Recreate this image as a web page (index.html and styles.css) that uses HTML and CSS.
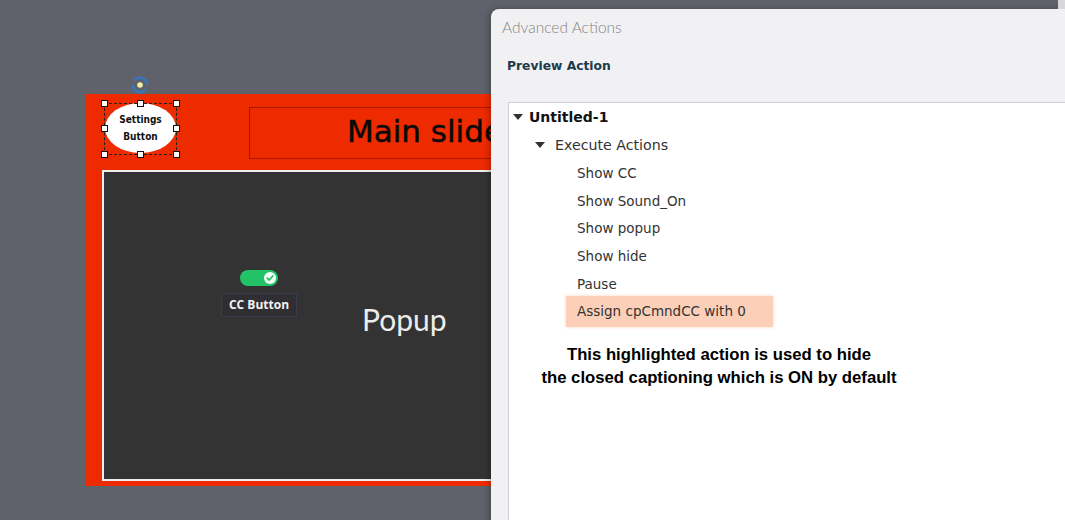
FILE: index.html
```html
<!DOCTYPE html>
<html lang="en">
<head>
  <meta charset="UTF-8" />
  <title>Advanced Actions - Preview</title>
  <link rel="stylesheet" href="styles.css">
</head>
<body>
  <!-- Slide being edited on the stage -->
  <div class="stage">
    <div class="slide">
      <div class="slide-header">
        <div class="settings-wrap">
          <div class="settings-btn">Settings<br>Button</div>
          <div class="selection">
            <span class="handle h-tl"></span><span class="handle h-tc"></span><span class="handle h-tr"></span>
            <span class="handle h-ml"></span><span class="handle h-mr"></span>
            <span class="handle h-bl"></span><span class="handle h-bc"></span><span class="handle h-br"></span>
          </div>
          <!-- rotate handle -->
          <svg class="rotate" width="20" height="20" viewBox="0 0 20 20">
            <path d="M4.5 5.5 A7 7 0 0 1 17 10" fill="none" stroke="#2b7bd0" stroke-width="2.4" opacity="0.85"/>
            <path d="M15.5 14.5 A7 7 0 0 1 3 10" fill="none" stroke="#2b7bd0" stroke-width="2.4" opacity="0.85"/>
            <circle cx="10" cy="10" r="2.8" fill="#f3efa6"/>
          </svg>
        </div>
        <div class="title-box">Main slide</div>
      </div>

      <div class="popup-panel">
        <div class="cc-widget">
          <div class="toggle">
            <span class="knob">
              <svg width="10" height="10" viewBox="0 0 10 10"><path d="M2.3 5.2 L4.2 7 L7.8 3" fill="none" stroke="#22c366" stroke-width="1.8" stroke-linecap="round" stroke-linejoin="round"/></svg>
            </span>
          </div>
          <div class="cc-label">CC Button</div>
        </div>
        <div class="popup-text">Popup</div>
      </div>
    </div>
  </div>

  <!-- Advanced Actions dialog window -->
  <div class="dialog">
    <div class="dialog-title">Advanced Actions</div>
    <div class="dialog-sub">Preview Action</div>
    <div class="preview">
      <div class="row row-root"><span class="caret"></span>Untitled-1</div>
      <div class="row row-group"><span class="caret"></span>Execute Actions</div>
      <div class="row row-item">Show CC</div>
      <div class="row row-item">Show Sound_On</div>
      <div class="row row-item">Show popup</div>
      <div class="row row-item">Show hide</div>
      <div class="row row-item">Pause</div>
      <div class="row row-item"><span class="highlight">Assign cpCmndCC with 0</span></div>
      <div class="note">This highlighted action is used to hide<br>the closed captioning which is ON by default</div>
    </div>
  </div>
  <div class="corner-win"></div>
</body>
</html>
```

FILE: styles.css
```css
html, body {
  margin: 0;
  height: 520px;
  overflow: hidden;
}
body {
  background: #5f626a;
  font-family: 'DejaVu Sans', Verdana, sans-serif;
  position: relative;
}

/* Stage + slide */
.stage {
  padding: 94px 0 0 85px;
}
.slide {
  width: 560px;
  height: 392px;
  background: #ee2b00;
  padding: 0 0 5px 17px;
  box-sizing: border-box;
  display: flex;
  flex-direction: column;
}
.slide-header {
  display: flex;
  align-items: flex-start;
  height: 76px;
  flex-shrink: 0;
}
.settings-wrap {
  position: relative;
  margin: 9px 0 0 3px;
}
.settings-btn {
  width: 71px;
  height: 50px;
  border-radius: 50%;
  background: #fff;
  color: #111;
  font-family: 'DejaVu Sans Condensed', 'DejaVu Sans', sans-serif;
  font-weight: 700;
  font-size: 10px;
  line-height: 17px;
  text-align: center;
  display: flex;
  align-items: center;
  justify-content: center;
}
.selection {
  position: absolute;
  left: -1px;
  top: 0;
  width: 73px;
  height: 52px;
  border: 1px dashed #222;
  box-sizing: border-box;
}
.handle {
  position: absolute;
  width: 5px;
  height: 5px;
  background: #fff;
  border: 1px solid #111;
}
.h-tl { left: -4px; top: -4px; }
.h-tc { left: 32px; top: -4px; }
.h-tr { right: -4px; top: -4px; }
.h-ml { left: -4px; top: 21px; }
.h-mr { right: -4px; top: 21px; }
.h-bl { left: -4px; bottom: -4px; }
.h-bc { left: 32px; bottom: -4px; }
.h-br { right: -4px; bottom: -4px; }
.rotate {
  position: absolute;
  left: 25px;
  top: -28px;
}
.title-box {
  margin: 13px 0 0 73px;
  height: 52px;
  flex: 1;
  border: 1px solid rgba(90, 0, 0, 0.45);
  box-sizing: border-box;
  font-size: 31px;
  line-height: 46px;
  color: #0a0a0a;
  -webkit-text-stroke: 0.5px #0a0a0a;
  padding-left: 97px;
  white-space: nowrap;
}
.popup-panel {
  flex: 1;
  background: #333;
  border: 2px solid #eeeeee;
  border-right: none;
  display: flex;
  align-items: flex-start;
  padding: 98px 0 0 117px;
}
.cc-widget {
  display: flex;
  flex-direction: column;
  align-items: center;
}
.toggle {
  width: 38px;
  height: 16px;
  border-radius: 8px;
  background: #22c366;
  display: flex;
  align-items: center;
  justify-content: flex-end;
  padding-right: 2px;
  box-sizing: border-box;
}
.knob {
  width: 12px;
  height: 12px;
  border-radius: 50%;
  background: #f4fff8;
  display: flex;
  align-items: center;
  justify-content: center;
}
.cc-label {
  margin-top: 7px;
  width: 76px;
  height: 24px;
  box-sizing: border-box;
  border: 1px solid #3a3a4a;
  background: #2f2f33;
  color: #f2f2f2;
  font-family: 'Open Sans', sans-serif;
  font-weight: 700;
  font-size: 12px;
  line-height: 22px;
  text-align: center;
}
.popup-text {
  margin: 31px 0 0 65px;
  color: #ececec;
  font-family: Lato, sans-serif;
  font-size: 30px;
}

/* Dialog window */
.dialog {
  position: absolute;
  left: 491px;
  top: 9px;
  width: 590px;
  height: 530px;
  background: #f1f1f3;
  border-top-left-radius: 8px;
  box-shadow: -2px 0 6px rgba(0, 0, 0, 0.25);
  display: flex;
  flex-direction: column;
}
.dialog-title {
  padding: 9px 0 0 11px;
  font-family: Lato, sans-serif;
  font-weight: 300;
  font-size: 15.5px;
  color: #858585;
  height: 28px;
}
.dialog-sub {
  padding: 13px 0 0 16px;
  font-family: 'DejaVu Sans', sans-serif;
  font-weight: 700;
  font-size: 12.3px;
  color: #1e3a4a;
  height: 38px;
  box-sizing: border-box;
}
.preview {
  margin: 18px 0 0 17px;
  flex: 1;
  background: #fff;
  border: 1px solid #cfcfd4;
}
.row {
  height: 27.7px;
  display: flex;
  align-items: center;
  font-size: 13.5px;
  color: #333;
  white-space: nowrap;
}
.caret {
  width: 0;
  height: 0;
  border-left: 5px solid transparent;
  border-right: 5px solid transparent;
  border-top: 6px solid #333;
  margin-right: 6px;
}
.row-root {
  height: 27px;
  padding-left: 4px;
  font-weight: 700;
  font-size: 14px;
  color: #111;
}
.row-group {
  height: 29px;
  padding-left: 26px;
  font-size: 14.2px;
}
.row-group .caret {
  margin-right: 10px;
}
.row-item {
  padding-left: 68px;
}
.row-item:first-of-type {
  margin-top: 1px;
}
.highlight {
  margin-left: -11px;
  padding-left: 11px;
  width: 207px;
  height: 31px;
  line-height: 31px;
  box-sizing: border-box;
  background: #fcd0b8;
  box-shadow: 0 0 3px #fcd0b8;
}
.note {
  margin-top: 18px;
  width: 420px;
  text-align: center;
  font-family: 'Liberation Sans', Arial, sans-serif;
  font-weight: 700;
  font-size: 16.7px;
  line-height: 23px;
  color: #000;
}
.corner-win {
  position: absolute;
  right: 0;
  top: 0;
  width: 7px;
  height: 9px;
  background: #d8d8dc;
}
```
